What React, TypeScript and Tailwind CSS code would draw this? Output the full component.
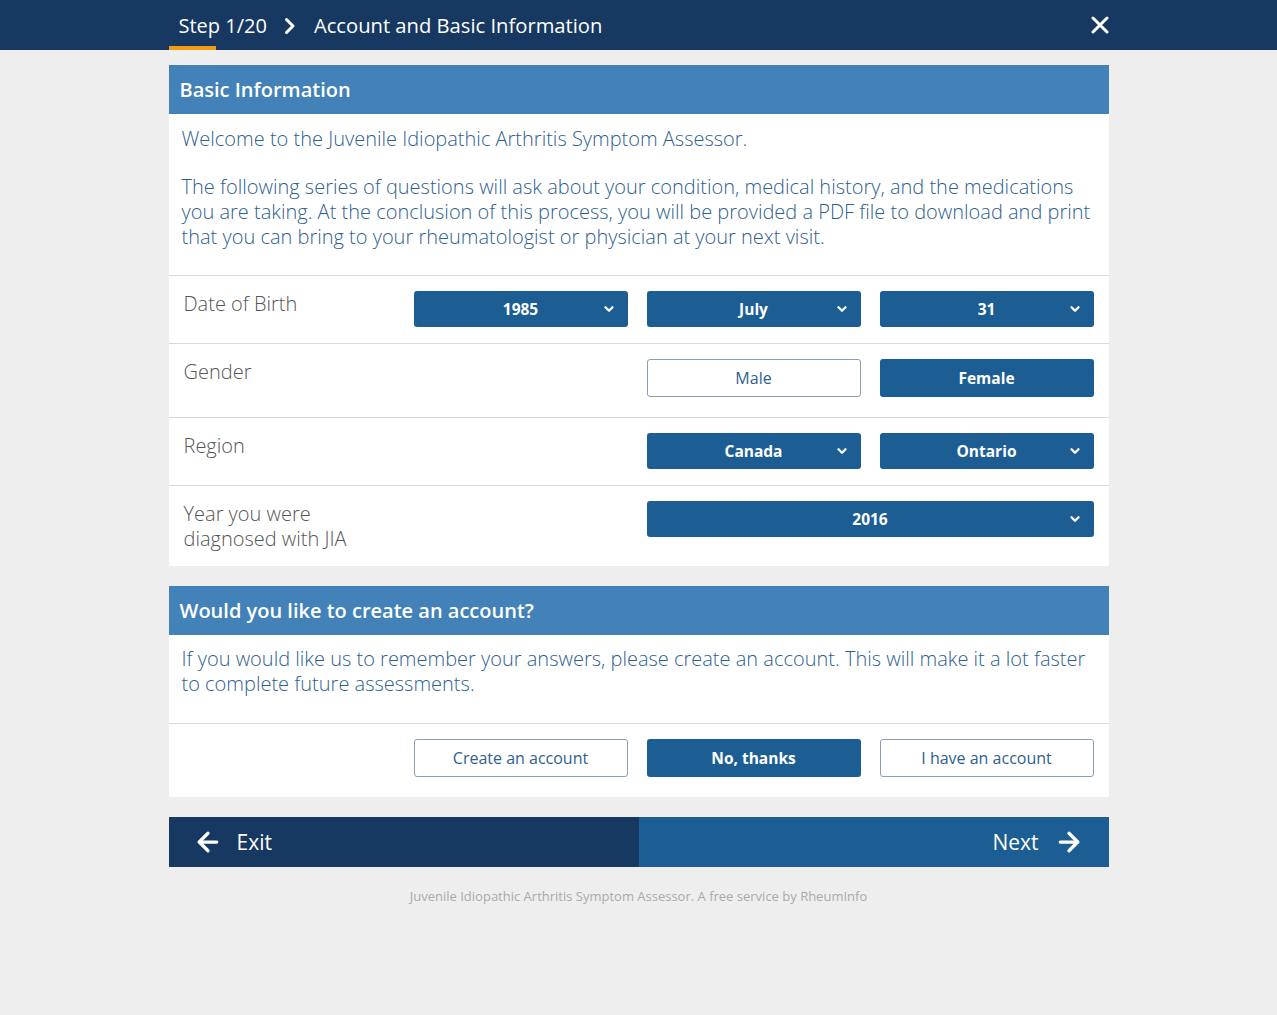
import { ChevronDown, ArrowLeft, ArrowRight } from 'lucide-react'

type Option = { label: string }

function Select({ label, span = false }: { label: string; span?: boolean }) {
  return (
    <div
      className={`relative flex h-9 items-center justify-center rounded-[3px] bg-[#1c5e94] pt-[1px] text-[15.5px] font-bold text-white ${span ? 'col-span-2' : ''}`}
    >
      {label}
      <ChevronDown className="absolute right-[12px] top-[11px]" size={14} strokeWidth={4} />
    </div>
  )
}

function Btn({ label, active = false }: { label: string; active?: boolean }) {
  return active ? (
    <button className="h-[38px] rounded-[3px] bg-[#1c5e94] pt-[1px] text-[15.5px] font-bold text-white">{label}</button>
  ) : (
    <button className="h-[38px] rounded-[3px] border border-[#8aa0b8] bg-white text-[16px] text-[#2f5f8f]">{label}</button>
  )
}

function Row({ label, children, h }: { label: string; children: React.ReactNode; h: string }) {
  return (
    <div
      className={`grid grid-cols-[211px_1fr_1fr_1fr] gap-x-[19px] border-t border-[#d8d8d8] px-[15px] pt-[15px] ${h}`}
    >
      <div className="text-[20px] font-light leading-[25px] text-[#555]">{label}</div>
      {children}
    </div>
  )
}

export default function App() {
  const months: Option[] = [{ label: 'July' }]
  return (
    <div className="min-h-[1015px] bg-[#eeeeee] font-['Open_Sans',sans-serif]">
      <header className="h-[50px] bg-[#173861]">
        <div className="mx-auto flex h-full w-[940px] items-center text-white">
          <div className="relative flex h-full items-center px-[10px] pt-[2px] text-[20px]">
            Step 1/20
            <span className="absolute bottom-0 left-0 h-[4px] w-[47px] bg-[#f39c12]" />
          </div>
          <svg className="ml-[7px] mr-[18px] mt-[2px]" width="12" height="18" viewBox="0 0 12 18">
            <polyline points="2.5,2.5 9,9 2.5,15.5" fill="none" stroke="white" strokeWidth="3" strokeLinecap="round" strokeLinejoin="round" />
          </svg>
          <div className="text-[20.2px]">Account and Basic Information</div>
          <svg className="ml-auto" width="18" height="18" viewBox="0 0 18 18">
            <path d="M2 2L16 16M16 2L2 16" stroke="white" strokeWidth="3" strokeLinecap="round" />
          </svg>
        </div>
      </header>

      <main className="mx-auto w-[940px] pt-[15px]">
        <section className="bg-white">
          <h2 className="flex h-[49px] items-center bg-[#4282b8] px-[11px] text-[20px] font-semibold text-white">
            Basic Information
          </h2>
          <div className="px-[13px] pb-[26px] pt-[12px] text-[20px] font-light leading-[25px] text-[#2f5f8f]">
            <p className="mb-[23px]">Welcome to the Juvenile Idiopathic Arthritis Symptom Assessor.</p>
            <p>
              The following series of questions will ask about your condition, medical history, and the medications
              you are taking. At the conclusion of this process, you will be provided a PDF file to download and print
              that you can bring to your rheumatologist or physician at your next visit.
            </p>
          </div>
          <Row label="Date of Birth" h="h-[68px]">
            <Select label="1985" />
            {months.map((m) => (
              <Select key={m.label} label={m.label} />
            ))}
            <Select label="31" />
          </Row>
          <Row label="Gender" h="h-[74px]">
            <div />
            <Btn label="Male" />
            <Btn label="Female" active />
          </Row>
          <Row label="Region" h="h-[68px]">
            <div />
            <Select label="Canada" />
            <Select label="Ontario" />
          </Row>
          <Row label="Year you were diagnosed with JIA" h="h-[81px]">
            <div />
            <Select label="2016" span />
          </Row>
        </section>

        <section className="mt-[20px] bg-white">
          <h2 className="flex h-[49px] items-center bg-[#4282b8] px-[11px] text-[20px] font-semibold text-white">
            Would you like to create an account?
          </h2>
          <div className="px-[13px] pb-[27px] pt-[11px] text-[20px] font-light leading-[25px] text-[#2f5f8f]">
            <p>
              If you would like us to remember your answers, please create an account. This will make it a lot faster
              to complete future assessments.
            </p>
          </div>
          <div className="grid h-[74px] grid-cols-[211px_1fr_1fr_1fr] gap-x-[19px] border-t border-[#d8d8d8] px-[15px] pt-[15px]">
            <div />
            <Btn label="Create an account" />
            <Btn label="No, thanks" active />
            <Btn label="I have an account" />
          </div>
        </section>

        <nav className="mt-[20px] flex h-[50px] text-[21px] text-white">
          <button className="flex w-[470px] items-center gap-[14px] bg-[#173861] pl-[24px] pt-[2px]">
            <ArrowLeft className="-mt-[2px]" size={30} strokeWidth={2.6} />
            Exit
          </button>
          <button className="flex flex-1 items-center justify-end gap-[15px] bg-[#1c5e94] pr-[25px] pt-[2px]">
            Next
            <ArrowRight className="-mt-[2px]" size={30} strokeWidth={2.6} />
          </button>
        </nav>

        <p className="mt-[20px] text-center text-[13px] text-[#aaaaaa]">
          Juvenile Idiopathic Arthritis Symptom Assessor. A free service by RheumInfo
        </p>
      </main>
    </div>
  )
}
